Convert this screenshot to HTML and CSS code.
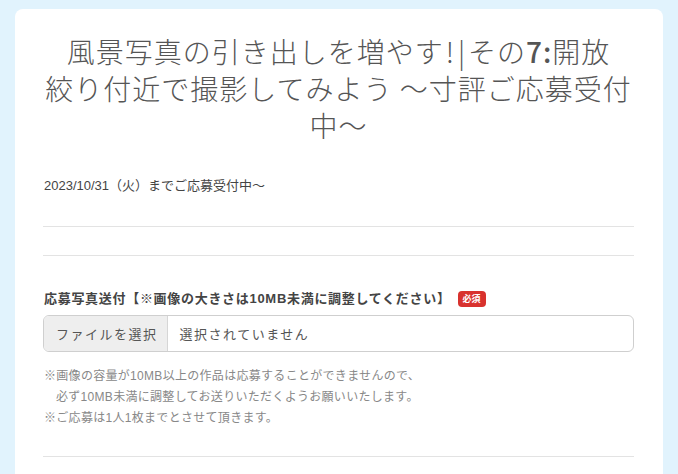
FILE: index.html
```html
<!DOCTYPE html>
<html lang="ja">
<head>
<meta charset="utf-8">
<title>応募フォーム</title>
<link rel="stylesheet" href="styles.css">
</head>
<body>
<main class="card">
  <h1 class="title">風景写真の引き出しを増やす<span class="mark">!</span><span class="bar">|</span>その<b>7:</b>開放<br>絞り付近で撮影してみよう ～寸評ご応募受付<br>中～</h1>
  <p class="period">2023/10/31（火）までご応募受付中～</p>
  <hr class="rule rule-first">
  <hr class="rule">
  <section class="field">
    <div class="label">応募写真送付【※画像の大きさは10MB未満に調整してください】<span class="badge">必須</span></div>
    <div class="file">
      <span class="file-btn">ファイルを選択</span>
      <span class="file-name">選択されていません</span>
    </div>
    <div class="notes">
      <p>※画像の容量が10MB以上の作品は応募することができませんので、</p>
      <p class="indent">必ず10MB未満に調整してお送りいただくようお願いいたします。</p>
      <p>※ご応募は1人1枚までとさせて頂きます。</p>
    </div>
  </section>
  <hr class="rule rule-last">
</main>
</body>
</html>
```

FILE: styles.css
```css
html, body {
  margin: 0;
  padding: 0;
}
body {
  background: #e1f3fd;
  font-family: "Liberation Sans", "Noto Sans CJK JP", sans-serif;
  color: #444;
  padding: 9px 15px 0 15px;
  height: 474px;
  box-sizing: border-box;
  overflow: hidden;
}
.card {
  background: #fff;
  border-radius: 8px;
  padding: 24px 29px 40px 28px;
  min-height: 600px;
}
.title {
  margin: 0;
  font-family: "Noto Sans CJK JP", sans-serif;
  font-weight: 300;
  font-size: 28px;
  line-height: 37px;
  letter-spacing: 1px;
  color: #555;
  text-align: center;
}
.title .mark {
  padding: 0 3px 0 2px;
}
.title .bar {
  padding-right: 2px;
}
.title b {
  font-weight: 500;
}
.period {
  margin: 32px 0 0 1px;
  font-size: 13px;
  line-height: 20px;
  color: #444;
}
.rule {
  border: 0;
  border-top: 1px solid #e3e3e3;
  margin: 28px 0 0 0;
}
.rule-first {
  margin-top: 30px;
}
.field {
  margin-top: 33px;
}
.label {
  display: flex;
  align-items: center;
  font-size: 13px;
  font-weight: bold;
  line-height: 20px;
  letter-spacing: 0.7px;
  color: #444;
  padding-left: 1px;
}
.badge {
  display: inline-block;
  background: #d8322e;
  color: #fff;
  font-size: 9px;
  font-weight: bold;
  line-height: 16px;
  letter-spacing: 0;
  padding: 0 5px;
  border-radius: 4px;
  margin-left: 7px;
}
.file {
  display: flex;
  margin-top: 6px;
  height: 37px;
  border: 1px solid #cfcfcf;
  border-radius: 6px;
  box-sizing: border-box;
  overflow: hidden;
  font-size: 13px;
  letter-spacing: 1.5px;
  color: #555;
}
.file-btn {
  display: flex;
  align-items: center;
  background: #eeeeee;
  border-right: 1px solid #d6d6d6;
  padding: 0 9px 0 12px;
}
.file-name {
  display: flex;
  align-items: center;
  padding-left: 12px;
}
.notes {
  margin-top: 14px;
  padding-left: 1px;
  font-size: 12px;
  letter-spacing: 0.3px;
  color: #888;
}
.notes p {
  margin: 0;
  line-height: 21px;
}
.notes .indent {
  padding-left: 12px;
}
.rule-last {
  margin-top: 27px;
}
```
